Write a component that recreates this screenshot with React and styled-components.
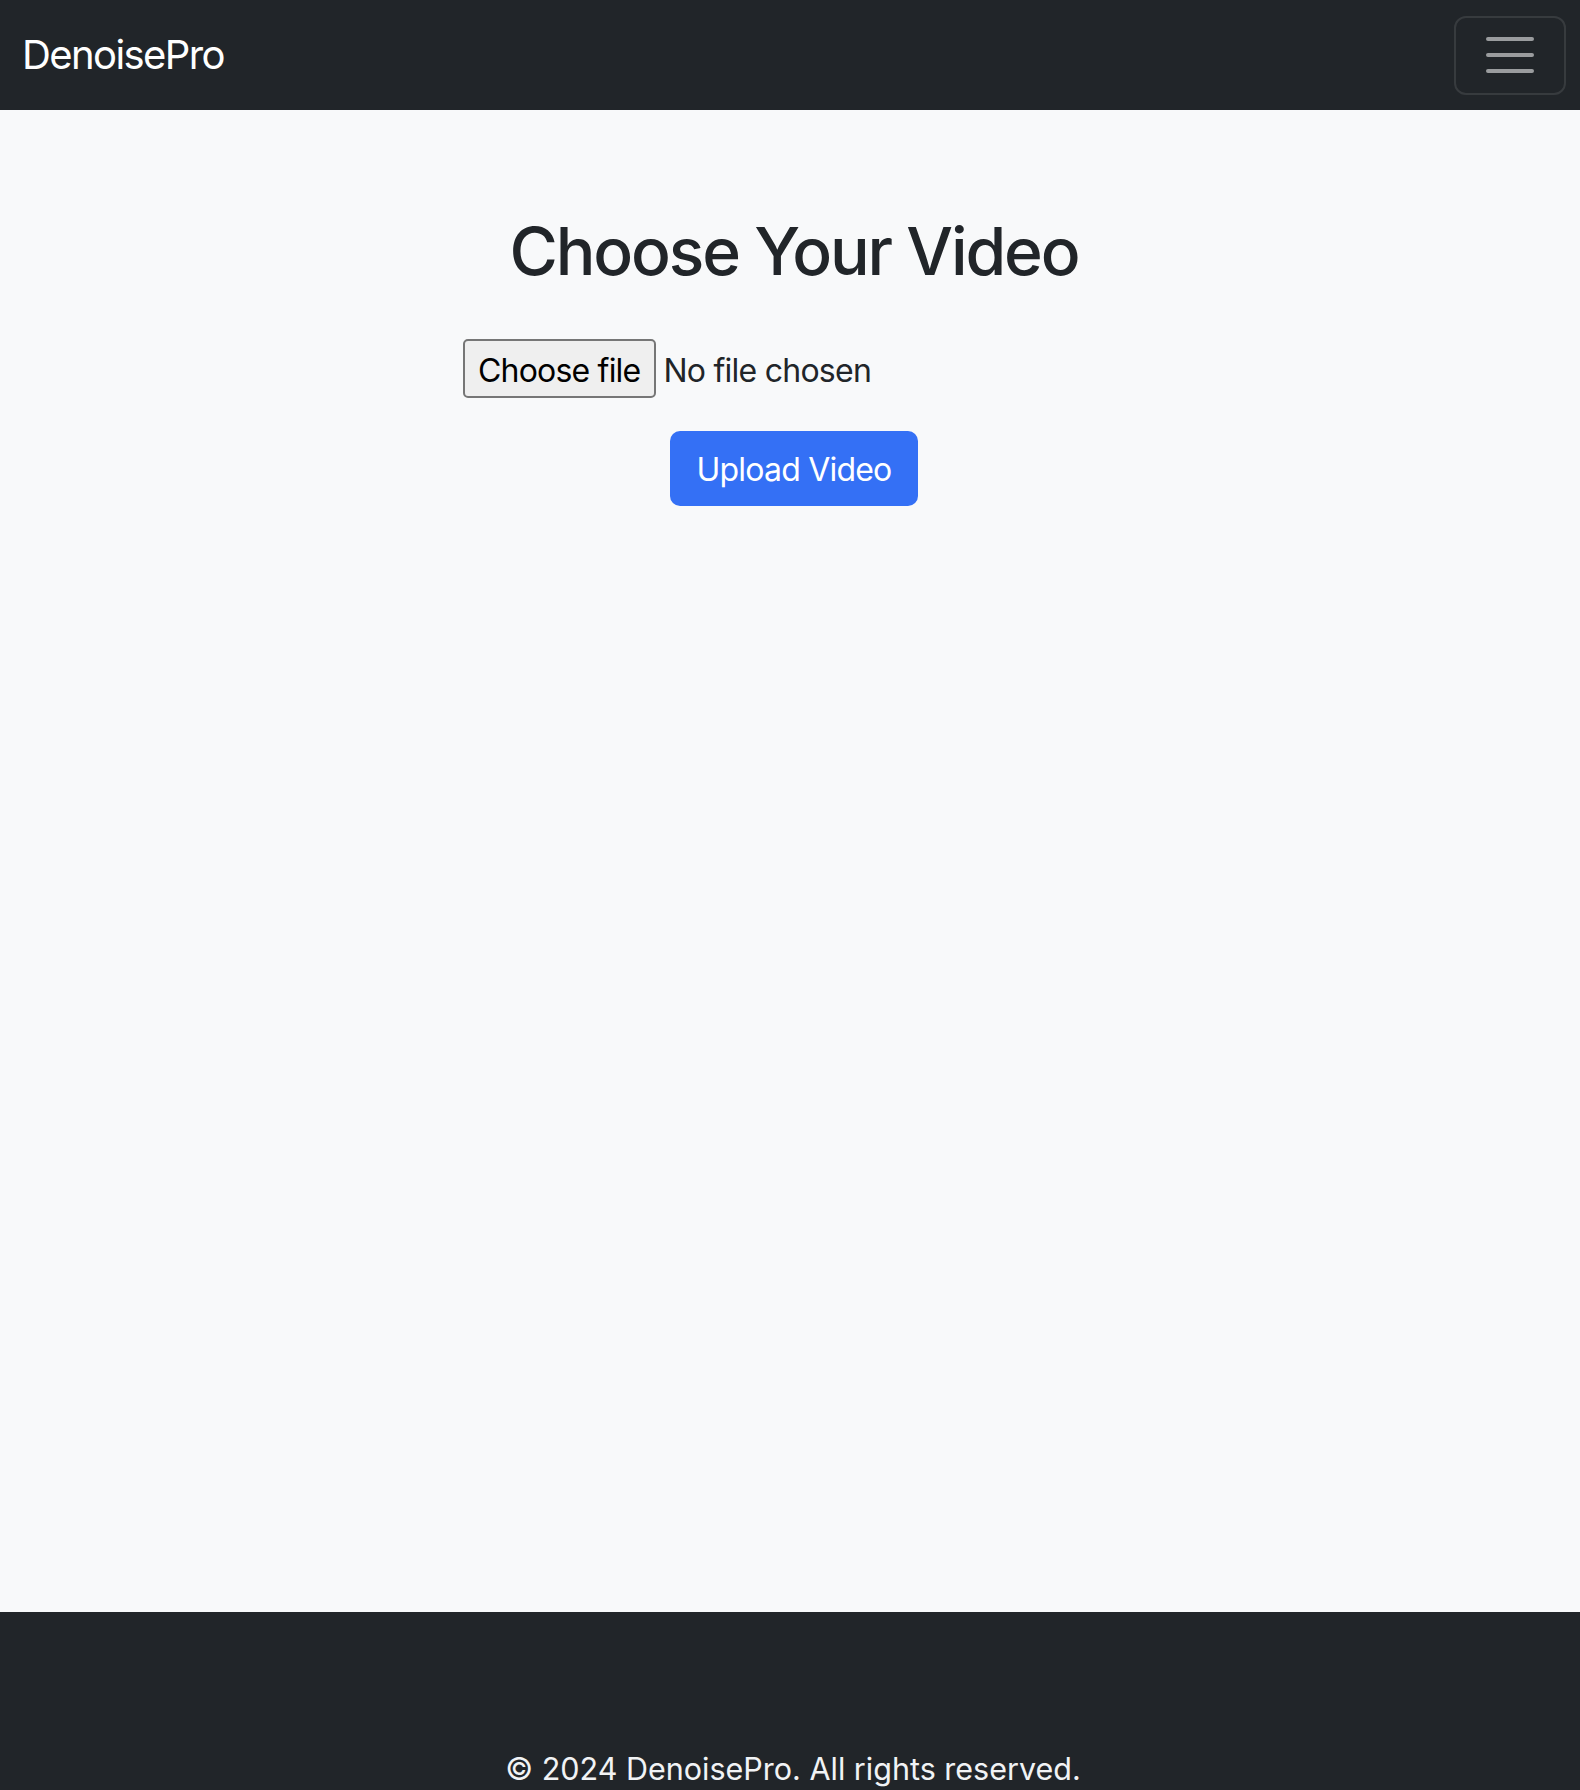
import React from 'react';
import styled, { createGlobalStyle } from 'styled-components';

const GlobalStyle = createGlobalStyle`
    * {
        box-sizing: border-box;
    }

    body {
        margin: 0;
        background: #f8f9fa;
        font-family: Inter, "Noto Sans", "Liberation Sans", sans-serif;
        color: #212529;
    }
`;

const App = () => {
    return (
        <>
            <GlobalStyle />
            <Page>
                <NavBar>
                    <Brand href="#">DenoisePro</Brand>
                    <Toggler type="button" aria-label="Toggle navigation">
                        <svg width="60" height="60" viewBox="0 0 30 30">
                            <path
                                d="M4 7h22M4 15h22M4 23h22"
                                stroke="rgba(255,255,255,0.55)"
                                strokeWidth="2"
                                strokeLinecap="round"
                            />
                        </svg>
                    </Toggler>
                </NavBar>

                <Main>
                    <Title>Choose Your Video</Title>
                    <UploadForm onSubmit={(e) => e.preventDefault()}>
                        <FileRow>
                            <FileButton>
                                Choose file
                                <HiddenInput type="file" accept="video/*" />
                            </FileButton>
                            <FileName>No file chosen</FileName>
                        </FileRow>
                        <SubmitButton type="submit">Upload Video</SubmitButton>
                    </UploadForm>
                </Main>

                <Footer>
                    <FooterText>&copy; 2024 DenoisePro. All rights reserved.</FooterText>
                </Footer>
            </Page>
        </>
    );
};

const Page = styled.div`
    display: flex;
    flex-direction: column;
    min-height: 100vh;
`;

const NavBar = styled.nav`
    height: 110px;
    background: #212529;
    display: flex;
    align-items: center;
    justify-content: space-between;
    padding: 0 14px 0 22px;
`;

const Brand = styled.a`
    color: #fff;
    text-decoration: none;
    font-size: 40px;
    font-weight: 400;
    letter-spacing: -1.6px;
    line-height: 1;
`;

const Toggler = styled.button`
    width: 112px;
    height: 79px;
    display: flex;
    align-items: center;
    justify-content: center;
    background: transparent;
    border: 2px solid rgba(255, 255, 255, 0.1);
    border-radius: 12px;
    padding: 0;
    cursor: pointer;
`;

const Main = styled.main`
    height: 1502px;
    display: flex;
    flex-direction: column;
    align-items: center;
    padding: 102px 0 0 8px;
`;

const Title = styled.h1`
    margin: 0;
    font-size: 66px;
    font-weight: 500;
    line-height: 79px;
    letter-spacing: -2.15px;
    color: #212529;
`;

const UploadForm = styled.form`
    display: flex;
    flex-direction: column;
    align-items: center;
    gap: 33px;
    margin-top: 48px;
`;

const FileRow = styled.div`
    width: 662px;
    display: flex;
    align-items: center;
    gap: 7px;
`;

const FileButton = styled.label`
    position: relative;
    height: 59px;
    display: flex;
    align-items: center;
    padding: 3px 14px 0 13px;
    background: #efefef;
    border: 2px solid #767676;
    border-radius: 5px;
    color: #000;
    font-size: 32px;
    letter-spacing: -0.8px;
    cursor: pointer;
`;

const HiddenInput = styled.input`
    display: none;
`;

const FileName = styled.span`
    padding-top: 3px;
    font-size: 32px;
    letter-spacing: -0.75px;
    color: #212529;
`;

const SubmitButton = styled.button`
    width: 248px;
    height: 75px;
    padding: 2px 0 0;
    background: #3470f5;
    color: #fff;
    border: none;
    border-radius: 10px;
    font-family: inherit;
    font-size: 32px;
    letter-spacing: -0.8px;
    cursor: pointer;
`;

const Footer = styled.footer`
    flex: 1;
    background: #212529;
    padding: 139px 0 40px 6px;
    text-align: center;
`;

const FooterText = styled.p`
    margin: 0;
    color: #f1f3f5;
    font-size: 30.5px;
    letter-spacing: 0;
    line-height: 1.2;
`;

export default App;
